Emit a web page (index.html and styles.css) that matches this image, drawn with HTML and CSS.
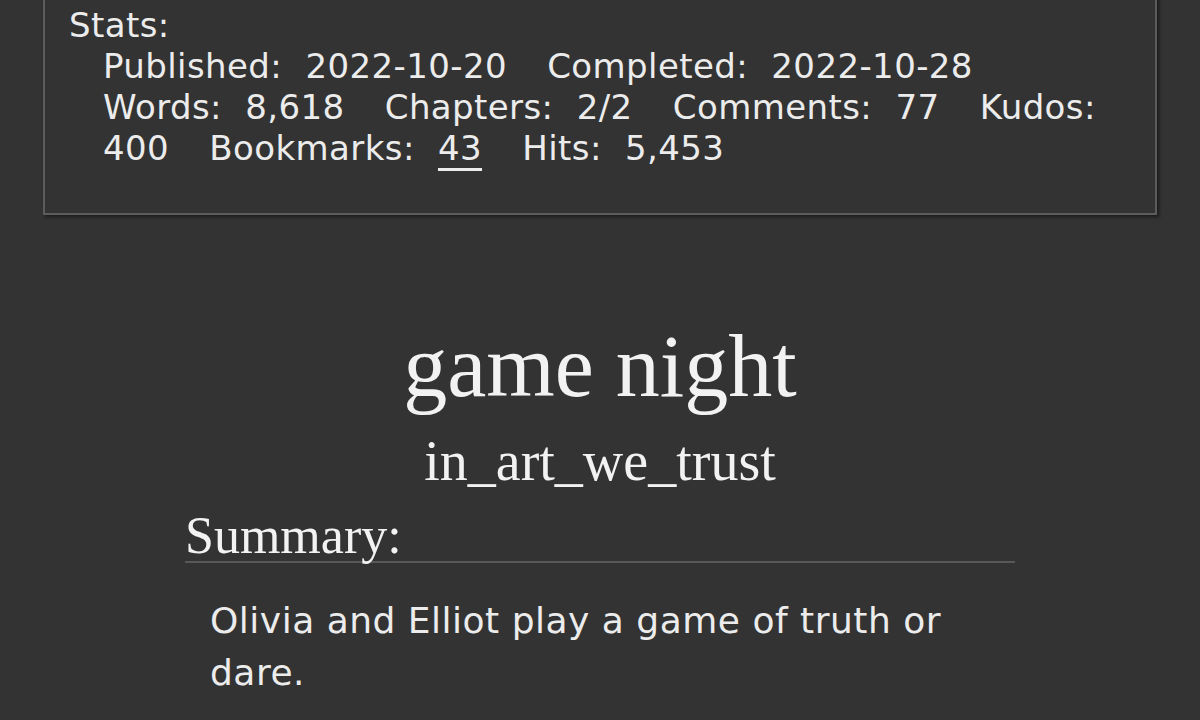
FILE: index.html
```html
<!DOCTYPE html>
<html lang="en">
<head>
<meta charset="utf-8">
<title>game night - in_art_we_trust</title>
<link rel="stylesheet" href="styles.css">
</head>
<body>
  <div class="work-meta">
    <p class="stats-label">Stats:</p>
    <dl class="stats">
      <dt>Published:</dt> <dd>2022-10-20</dd>
      <dt>Completed:</dt> <dd>2022-10-28</dd>
      <dt>Words:</dt> <dd>8,618</dd>
      <dt>Chapters:</dt> <dd>2/2</dd>
      <dt>Comments:</dt> <dd>77</dd>
      <dt>Kudos:</dt> <dd>400</dd>
      <dt>Bookmarks:</dt> <dd><a href="#bookmarks">43</a></dd>
      <dt>Hits:</dt> <dd>5,453</dd>
    </dl>
  </div>

  <div class="preface">
    <h2 class="title">game night</h2>
    <h3 class="byline">in_art_we_trust</h3>
    <div class="summary">
      <h3 class="heading">Summary:</h3>
      <blockquote class="userstuff">
        <p>Olivia and Elliot play a game of truth or dare.</p>
      </blockquote>
    </div>
  </div>
</body>
</html>
```

FILE: styles.css
```css
html, body {
  margin: 0;
  padding: 0;
}

body {
  background: #333333;
  color: #ececec;
  font-family: "DejaVu Sans", Verdana, sans-serif;
}

/* meta box with the work statistics */
.work-meta {
  margin: -10px 43px 0;
  padding: 13px 33px 44px 24px;
  border: 2px solid #5c5c5c;
  box-shadow: 2px 2px 3px #1c1c1c;
  font-size: 34px;
  line-height: 41px;
  letter-spacing: 0.4px;
}

.stats-label {
  margin: 0;
}

.stats {
  margin: 0 0 0 34px;
}

.stats dt,
.stats dd {
  display: inline;
  margin: 0;
}

.stats dt {
  margin-right: 12px;
}

.stats dd {
  margin-right: 29px;
}

.stats a {
  color: inherit;
  text-decoration: underline;
  text-decoration-thickness: 3px;
  text-underline-offset: 8px;
}

/* preface: title, author, summary */
.preface {
  text-align: center;
  color: #f2f2f2;
}

.title {
  margin: 100px 0 0;
  font-family: "Liberation Serif", "Times New Roman", serif;
  font-weight: normal;
  font-size: 88px;
  line-height: 103px;
}

.byline {
  margin: 11px 0 0;
  font-family: "Liberation Serif", "Times New Roman", serif;
  font-weight: normal;
  font-size: 56px;
  line-height: 65px;
}

.summary {
  width: 830px;
  margin: 17px auto 0;
  text-align: left;
}

.summary .heading {
  margin: 0;
  border-bottom: 2px solid #585858;
  font-family: "Liberation Serif", "Times New Roman", serif;
  font-weight: normal;
  font-size: 52px;
  line-height: 50px;
}

.userstuff {
  margin: 32px 24px 0 25px;
  font-size: 36px;
  line-height: 52px;
  letter-spacing: 0.5px;
  color: #ececec;
}

.userstuff p {
  margin: 0;
}
```
